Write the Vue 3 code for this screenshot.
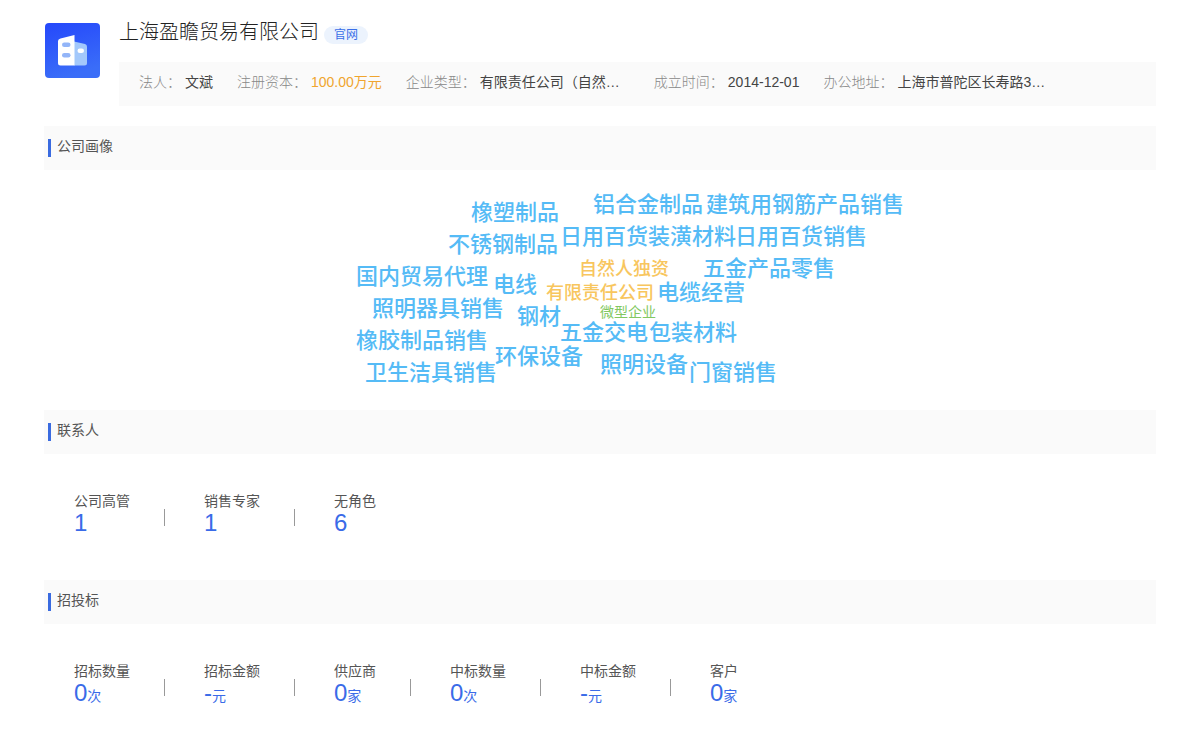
<script setup>
const facts = [
  { label: '法人：', value: '文斌' },
  { label: '注册资本：', value: '100.00万元', tone: 'money' },
  { label: '企业类型：', value: '有限责任公司（自然…', tone: 'wide' },
  { label: '成立时间：', value: '2014-12-01' },
  { label: '办公地址：', value: '上海市普陀区长寿路3…', tone: 'wide' },
]

// x = left edge, y = vertical centre, both on the 640 x 240 cloud canvas
const words = [
  { text: '橡塑制品', x: 191, y: 43 },
  { text: '铝合金制品', x: 313, y: 35 },
  { text: '建筑用钢筋产品销售', x: 426, y: 35 },
  { text: '不锈钢制品', x: 168, y: 75 },
  { text: '日用百货装潢材料', x: 280, y: 67 },
  { text: '日用百货销售', x: 455, y: 67 },
  { text: '自然人独资', x: 299, y: 99, kind: 'owner' },
  { text: '五金产品零售', x: 423, y: 99 },
  { text: '国内贸易代理', x: 76, y: 107 },
  { text: '电线', x: 213, y: 115 },
  { text: '有限责任公司', x: 266, y: 123, kind: 'owner' },
  { text: '电缆经营', x: 377, y: 123 },
  { text: '照明器具销售', x: 92, y: 139 },
  { text: '钢材', x: 237, y: 147 },
  { text: '微型企业', x: 320, y: 142, kind: 'scale' },
  { text: '五金交电', x: 280, y: 163 },
  { text: '包装材料', x: 369, y: 163 },
  { text: '橡胶制品销售', x: 76, y: 171 },
  { text: '环保设备', x: 215, y: 187 },
  { text: '照明设备', x: 320, y: 195 },
  { text: '门窗销售', x: 409, y: 203 },
  { text: '卫生洁具销售', x: 85, y: 203 },
]

const statSections = [
  {
    title: '联系人',
    stats: [
      { label: '公司高管', value: '1' },
      { label: '销售专家', value: '1' },
      { label: '无角色', value: '6' },
    ],
  },
  {
    title: '招投标',
    stats: [
      { label: '招标数量', value: '0', unit: '次' },
      { label: '招标金额', value: '-', unit: '元' },
      { label: '供应商', value: '0', unit: '家' },
      { label: '中标数量', value: '0', unit: '次' },
      { label: '中标金额', value: '-', unit: '元' },
      { label: '客户', value: '0', unit: '家' },
    ],
  },
]
</script>

<template>
  <main class="page">
    <header class="company">
      <svg class="logo" viewBox="0 0 55 55" aria-hidden="true">
        <defs>
          <linearGradient id="logoBg" x1="0" y1="0" x2="0.3" y2="1">
            <stop offset="0" stop-color="#2548fb" />
            <stop offset="1" stop-color="#3a6df8" />
          </linearGradient>
        </defs>
        <rect width="55" height="55" rx="4" fill="url(#logoBg)" />
        <path d="M29 18.5 40 21q2 .6 2 2.500V40q0 2.500-2.500 2.500H29z" fill="#a3c8fb" />
        <path d="M15.500 15.500 29.500 12V42.500H15.500q-2.500 0-2.500-2.500V18q0-2 2.500-2.500z" fill="#fff" />
        <rect x="17" y="19.500" width="8.500" height="4.500" rx="2.250" fill="#93b5f8" />
        <rect x="17" y="30" width="8.500" height="4.500" rx="2.250" fill="#93b5f8" />
        <rect x="32.500" y="25.500" width="6.500" height="4.500" rx="2.250" fill="#fff" />
      </svg>
      <div class="summary">
        <div class="name-row">
          <h1>上海盈瞻贸易有限公司</h1>
          <a class="site" href="#">官网</a>
        </div>
        <dl class="facts">
          <div v-for="f in facts" :key="f.label" class="fact">
            <dt>{{ f.label }}</dt>
            <dd :class="f.tone">{{ f.value }}</dd>
          </div>
        </dl>
      </div>
    </header>

    <section>
      <div class="bar"><h2>公司画像</h2></div>
      <div class="cloud">
        <span
          v-for="w in words"
          :key="w.text"
          class="word"
          :class="w.kind"
          :style="{ left: w.x + 'px', top: w.y + 'px' }"
        >{{ w.text }}</span>
      </div>
    </section>

    <section v-for="s in statSections" :key="s.title">
      <div class="bar"><h2>{{ s.title }}</h2></div>
      <ul class="stats">
        <li v-for="item in s.stats" :key="item.label">
          <span class="stat-label">{{ item.label }}</span>
          <span class="stat-value">{{ item.value }}<small v-if="item.unit">{{ item.unit }}</small></span>
        </li>
      </ul>
    </section>
  </main>
</template>

<style>
body {
  margin: 0;
  background: #fff;
}
</style>

<style scoped>
.page {
  padding: 18px 44px 0;
  font-family: "Liberation Sans", "Noto Sans CJK SC", sans-serif;
  font-size: 14px;
  line-height: 20px;
  color: #555;
}
h1,
h2,
dl,
dd,
ul {
  margin: 0;
  padding: 0;
  font-weight: 400;
}
.company {
  display: flex;
  gap: 19px;
  margin-bottom: 20px;
}
.logo {
  flex: none;
  width: 55px;
  height: 55px;
  margin: 5px 0 0 1px;
}
.summary {
  flex: 1;
  min-width: 0;
}
.name-row {
  display: flex;
  align-items: flex-start;
  gap: 5px;
  height: 44px;
}
h1 {
  font-size: 20px;
  font-weight: 300;
  line-height: 28px;
  color: #222;
}
.site {
  margin-top: 8px;
  padding: 0 10px;
  border-radius: 9px;
  background: #ecf3fd;
  color: #3a6fe8;
  font-size: 12px;
  line-height: 18px;
  text-decoration: none;
}
.facts {
  display: flex;
  gap: 24px;
  height: 44px;
  padding: 10px 20px 0;
  box-sizing: border-box;
  background: #fafafa;
  white-space: nowrap;
}
.fact {
  display: flex;
  gap: 4px;
}
dt {
  font-weight: 300;
  color: #888;
}
dd {
  color: #444;
}
.money {
  color: #f0a52e;
}
.wide {
  min-width: 150px;
}
.bar {
  display: flex;
  align-items: flex-start;
  height: 44px;
  padding: 13px 4px 0;
  box-sizing: border-box;
  background: #fafafa;
}
h2 {
  height: 18px;
  padding-left: 6px;
  border-left: 3px solid #3a6be0;
  font-size: 14px;
  line-height: 14px;
}
.cloud {
  position: relative;
  width: 640px;
  height: 240px;
  margin: 0 auto;
}
.word {
  position: absolute;
  transform: translateY(-50%);
  font-size: 22px;
  font-weight: 500;
  line-height: 24px;
  white-space: nowrap;
  color: #55bbf6;
}
.owner {
  font-size: 18px;
  color: #f8c65e;
}
.scale {
  font-size: 14px;
  font-weight: 400;
  color: #82c861;
}
.stats {
  display: flex;
  height: 126px;
  padding: 37px 30px 0;
  box-sizing: border-box;
  list-style: none;
}
li {
  display: flex;
  flex-direction: column;
}
li + li::before {
  content: "";
  position: absolute;
  width: 1px;
  height: 17px;
  margin: 18px 0 0 -40px;
  background: #999;
}
li + li {
  margin-left: 74px;
}
.stat-value {
  font-size: 24px;
  line-height: 24px;
  color: #3a6be8;
}
small {
  font-size: 14px;
}
</style>
